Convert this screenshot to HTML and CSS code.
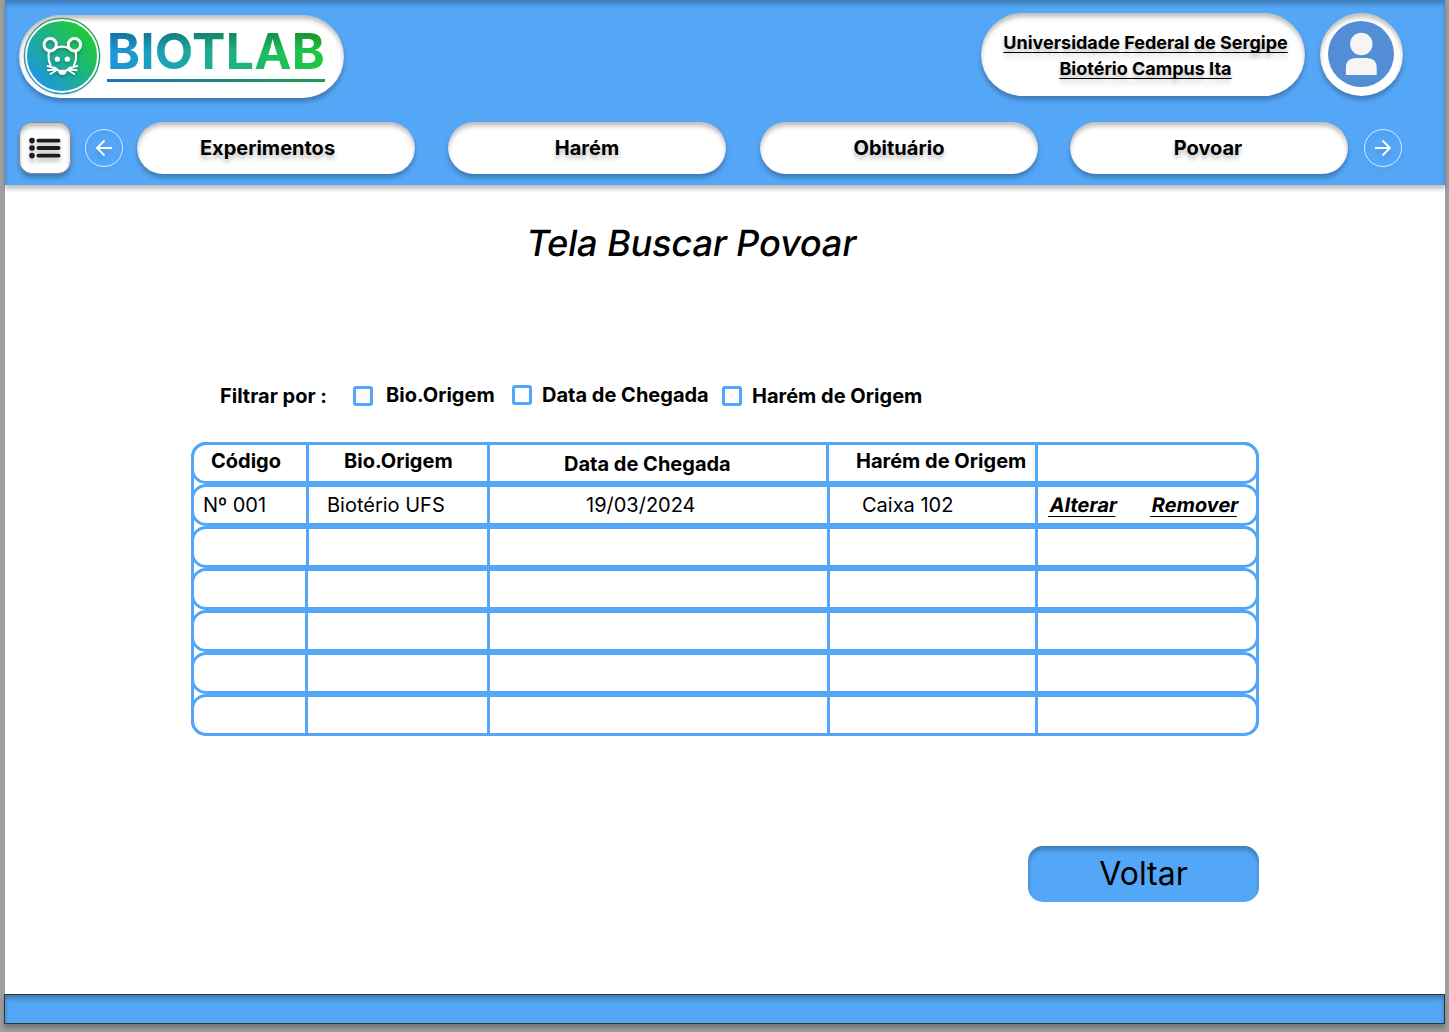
FILE: index.html
```html
<!DOCTYPE html>
<html lang="pt-BR">
<head>
<meta charset="utf-8">
<title>BIOTLAB - Buscar Povoar</title>
<link rel="stylesheet" href="styles.css">
</head>
<body>
<div class="page">
  <header class="header">
    <div class="top">
      <a class="brand raised">
        <svg class="brand-icon" width="78" height="78" viewBox="0 0 78 78">
          <defs>
            <linearGradient id="brand" x1="0.1" y1="0.85" x2="0.85" y2="0.15">
              <stop offset="0" stop-color="#1b95e6"/>
              <stop offset="1" stop-color="#1fcb35"/>
            </linearGradient>
            <linearGradient id="rim" x1="0" y1="1" x2="0.8" y2="0">
              <stop offset="0" stop-color="#1b95e0"/>
              <stop offset="1" stop-color="#1f9c3c"/>
            </linearGradient>
          </defs>
          <circle cx="39" cy="39" r="38.3" fill="url(#rim)"/>
          <circle cx="39" cy="39" r="36" fill="url(#brand)" stroke="#fff" stroke-width="1.9"/>
          <g class="mouse" fill="none" stroke="#fff" stroke-width="2.2" stroke-linecap="round" stroke-linejoin="round">
            <circle cx="27.2" cy="27.8" r="6.2" stroke-width="3"/>
            <circle cx="51.4" cy="27.8" r="6.2" stroke-width="3"/>
            <path d="M33 31Q39.3 28.2 45.6 31M26 34.5C25 40 25.4 44 27.6 48M52.6 34.5C53.6 40 53.2 44 51 48"/>
            <path d="M24.5 49L33 51.3M25 53.3L33 52.2M27.5 57L33.8 53M54.2 49L45.7 51.3M53.7 53.3L45.7 52.2M51.2 57L44.9 53M31 50.4L36.6 54M47.8 50.4L42.2 54" stroke-width="1.9"/>
            <circle cx="34.3" cy="42.2" r="2.6" fill="#fff" stroke="none"/>
            <circle cx="44.3" cy="42.2" r="2.6" fill="#fff" stroke="none"/>
            <path d="M35 53.6Q39.4 52 43.8 53.6Q43.4 58 39.4 58Q35.4 58 35 53.6Z" fill="#fff" stroke="none"/>
          </g>
        </svg>
        <span class="brand-name">BIOTLAB</span>
      </a>
      <div class="account">
        <a class="institution raised"><span>Universidade Federal de Sergipe</span><span>Biotério Campus Ita</span></a>
        <a class="avatar raised">
          <svg width="66" height="66" viewBox="0 0 66 66">
            <circle cx="33" cy="33" r="33" fill="#528dd6"/>
            <circle cx="33.3" cy="23" r="11.2" fill="#f5f5f5"/>
            <path d="M17.9 54V47Q17.9 37 27.7 37H38.9Q48.7 37 48.7 47V54Z" fill="#f5f5f5"/>
          </svg>
        </a>
      </div>
    </div>
    <nav class="nav">
      <a class="menu raised">
        <svg width="32" height="22" viewBox="0 -0.6 32 22" fill="#1e1b1c">
          <circle cx="3" cy="3" r="2.8"/><circle cx="3" cy="10.4" r="2.8"/><circle cx="3" cy="18" r="2.8"/>
          <rect x="7.5" y="1.1" width="24" height="3.9" rx="1.9"/><rect x="7.5" y="8.5" width="24" height="3.9" rx="1.9"/><rect x="7.5" y="16.1" width="24" height="3.9" rx="1.9"/>
        </svg>
      </a>
      <svg class="arrow" width="38" height="38" viewBox="0 0 38 38" fill="none" stroke="#fff">
        <circle cx="19" cy="19" r="18.5" stroke-width="0.9" stroke-opacity="0.85"/>
        <path d="M27 19H12M19.5 11.5L12 19L19.5 26.5" stroke-width="1.8"/>
      </svg>
      <a class="tab raised tab-experimentos">Experimentos</a>
      <a class="tab raised tab-harem">Harém</a>
      <a class="tab raised tab-obituario">Obituário</a>
      <a class="tab raised tab-povoar">Povoar</a>
      <svg class="arrow arrow-next" width="38" height="38" viewBox="0 0 38 38" fill="none" stroke="#fff">
        <circle cx="19" cy="19" r="18.5" stroke-width="0.9" stroke-opacity="0.85"/>
        <path d="M11 19H26M18.5 11.5L26 19L18.5 26.5" stroke-width="1.8"/>
      </svg>
    </nav>
  </header>

  <main class="content">
    <h1 class="title">Tela Buscar Povoar</h1>

    <div class="filters">
      <span class="filters-label">Filtrar por :</span>
      <label class="filter filter-bio"><i class="box tinted"></i><span class="up">Bio.Origem</span></label>
      <label class="filter filter-data up"><i class="box"></i><span>Data de Chegada</span></label>
      <label class="filter filter-harem"><i class="box"></i><span>Harém de Origem</span></label>
    </div>

    <div class="table">
      <div class="row head"><div>Código</div><div>Bio.Origem</div><div>Data de Chegada</div><div>Harém de Origem</div><div></div></div>
      <div class="row"><div>Nº 001</div><div>Biotério UFS</div><div>19/03/2024</div><div>Caixa 102</div><div class="actions"><a>Alterar</a><a>Remover</a></div></div>
      <div class="row"><div></div><div></div><div></div><div></div><div></div></div>
      <div class="row"><div></div><div></div><div></div><div></div><div></div></div>
      <div class="row"><div></div><div></div><div></div><div></div><div></div></div>
      <div class="row"><div></div><div></div><div></div><div></div><div></div></div>
      <div class="row"><div></div><div></div><div></div><div></div><div></div></div>
    </div>

    <a class="back">Voltar</a>
  </main>

  <footer class="footer"></footer>
</div>
</body>
</html>
```

FILE: styles.css
```css
* { box-sizing: border-box; }

body {
  margin: 0;
  height: 1032px;
  overflow: hidden;
  background: #9e9e9e;
  color: #000;
  font-family: Inter, sans-serif;
  font-size: 20px;
  line-height: 24px;
}

.page {
  width: 1440px;
  height: 1032px;
  margin-left: 5px;
  display: flex;
  flex-direction: column;
}

.header {
  position: relative;
  height: 185px;
  padding: 13px 42px 0 14px;
  background: #54a6f6;
  box-shadow: inset 0 4px 4px rgba(0, 0, 0, .25), 0 4px 4px rgba(0, 0, 0, .25);
}

.raised {
  background: #fff;
  box-shadow: inset 0 4px 4px rgba(0, 0, 0, .25), 0 4px 4px rgba(0, 0, 0, .25);
}

.top {
  display: flex;
  justify-content: space-between;
  height: 109px;
}

.brand {
  display: flex;
  gap: 6px;
  width: 325px;
  height: 83px;
  margin-top: 2px;
  padding: 2px 0 0 4px;
  border-radius: 42px;
}

.brand-icon { filter: drop-shadow(0 1px 1px rgba(0, 0, 0, .12)); }
.mouse { filter: drop-shadow(0 2px 1.5px rgba(0, 0, 0, .25)); }

.brand-name {
  width: 218px;
  height: 65px;
  font-size: 50px;
  font-weight: 700;
  line-height: 68px;
  letter-spacing: .3px;
  white-space: nowrap;
  color: transparent;
  background: linear-gradient(to bottom, rgba(0, 0, 0, .22) 18px, transparent 34px), linear-gradient(75deg, #1b93e4, #1fcb30);
  background-clip: text;
  -webkit-background-clip: text;
  border-bottom: 3px solid;
  border-image: linear-gradient(to right, #1d74bd, #1f9c48) 1;
}

.account { display: flex; gap: 15px; }

.institution {
  display: flex;
  flex-direction: column;
  align-items: center;
  width: 324px;
  height: 83px;
  padding: 17px 0 0 5px;
  border-radius: 42px;
  font-size: 18px;
  line-height: 26px;
  font-weight: 700;
  text-decoration: underline;
  text-decoration-thickness: 1px;
  text-underline-offset: 3px;
  text-decoration-skip-ink: none;
  text-shadow: 0 4px 4px rgba(0, 0, 0, .25);
}

.avatar {
  display: flex;
  align-items: center;
  justify-content: center;
  width: 83px;
  height: 83px;
  padding: 0 1px 1px 0;
  border-radius: 50%;
}

.nav { display: flex; align-items: center; height: 52px; }

.menu {
  display: flex;
  align-items: center;
  justify-content: center;
  width: 52px;
  height: 52px;
  margin-right: 14px;
  border: 1px solid #8a8a8a;
  border-radius: 13px;
}
.menu svg { filter: drop-shadow(0 4px 2px rgba(0, 0, 0, .25)); }

.arrow { filter: drop-shadow(0 4px 2px rgba(0, 0, 0, .12)); }

.tab {
  width: 278px;
  height: 52px;
  border-radius: 26px;
  font-weight: 700;
  line-height: 52px;
  text-align: center;
  text-shadow: 0 4px 4px rgba(0, 0, 0, .25);
}
.tab-experimentos { margin-left: 14px; padding-right: 17px; }
.tab-harem { margin-left: 33px; }
.tab-obituario { margin-left: 34px; }
.tab-povoar { margin-left: 32px; padding-right: 2px; }
.arrow-next { margin-left: 16px; }

.content { height: 809px; background: #fff; }

.title {
  width: 328px;
  margin: 36px 0 0 522px;
  font-size: 36px;
  line-height: 44px;
  font-weight: 500;
  letter-spacing: -.08px;
  white-space: nowrap;
  transform: skewX(-9.4deg);
}

.filters {
  display: flex;
  height: 24px;
  margin: 119px 0 0 215px;
  font-weight: 700;
  white-space: nowrap;
}
.filters-label { width: 133px; }
.filter { display: flex; align-items: center; }
.filter-bio { width: 159px; gap: 13px; }
.filter-data { width: 210px; gap: 10px; }
.filter-harem { gap: 10px; }
.up { margin-top: -2px; }

.box {
  width: 20px;
  height: 20px;
  border: 3px solid #54a6f6;
  border-radius: 3px;
}
.tinted { background: #fffafa; }

.table {
  width: 1068px;
  height: 294px;
  margin: 34px 0 0 186px;
  border-radius: 15px;
  box-shadow: inset 0 0 0 3px #54a6f6;
}

.row {
  display: grid;
  grid-template-columns: 114px 182px 340px 208px 1fr;
  height: 42px;
  border: 3px solid #54a6f6;
  border-radius: 15px;
  line-height: 36px;
  white-space: nowrap;
}
.row > div { border-right: 3px solid #54a6f6; }
.row > div:last-child { border-right: 0; }
.row:nth-child(-n+3) { grid-template-columns: 115px 181px 340px 208px 1fr; }
.row.head { grid-template-columns: 115px 181px 339px 209px 1fr; font-weight: 700; line-height: 32px; }

.head > div:nth-child(1) { padding-left: 17px; }
.head > div:nth-child(2) { padding-left: 35px; }
.head > div:nth-child(3) { padding-left: 74px; line-height: 38px; }
.head > div:nth-child(4) { padding-left: 27px; }

.row:nth-child(2) > div:nth-child(1) { padding-left: 9px; }
.row:nth-child(2) > div:nth-child(2) { padding-left: 18px; }
.row:nth-child(2) > div:nth-child(3) { padding-left: 96px; }
.row:nth-child(2) > div:nth-child(4) { padding-left: 32px; }

.actions {
  display: flex;
  gap: 35px;
  padding-left: 12px;
  font-weight: 700;
}
.actions a {
  text-decoration: underline;
  text-decoration-thickness: 1px;
  text-underline-offset: 4px;
  transform: skewX(-9.4deg);
}

.back {
  display: block;
  width: 231px;
  height: 56px;
  margin: 110px 0 0 1023px;
  border-radius: 15px;
  background: #54a6f6;
  box-shadow: inset 0 4px 4px rgba(0, 0, 0, .25);
  font-size: 32px;
  line-height: 56px;
  text-align: center;
}

.footer {
  width: 1441px;
  height: 30px;
  margin-left: -1px;
  border: 1px solid #333;
  background: #54a6f6;
  box-shadow: inset 0 4px 4px rgba(0, 0, 0, .25), 0 4px 4px rgba(0, 0, 0, .25);
}
```
